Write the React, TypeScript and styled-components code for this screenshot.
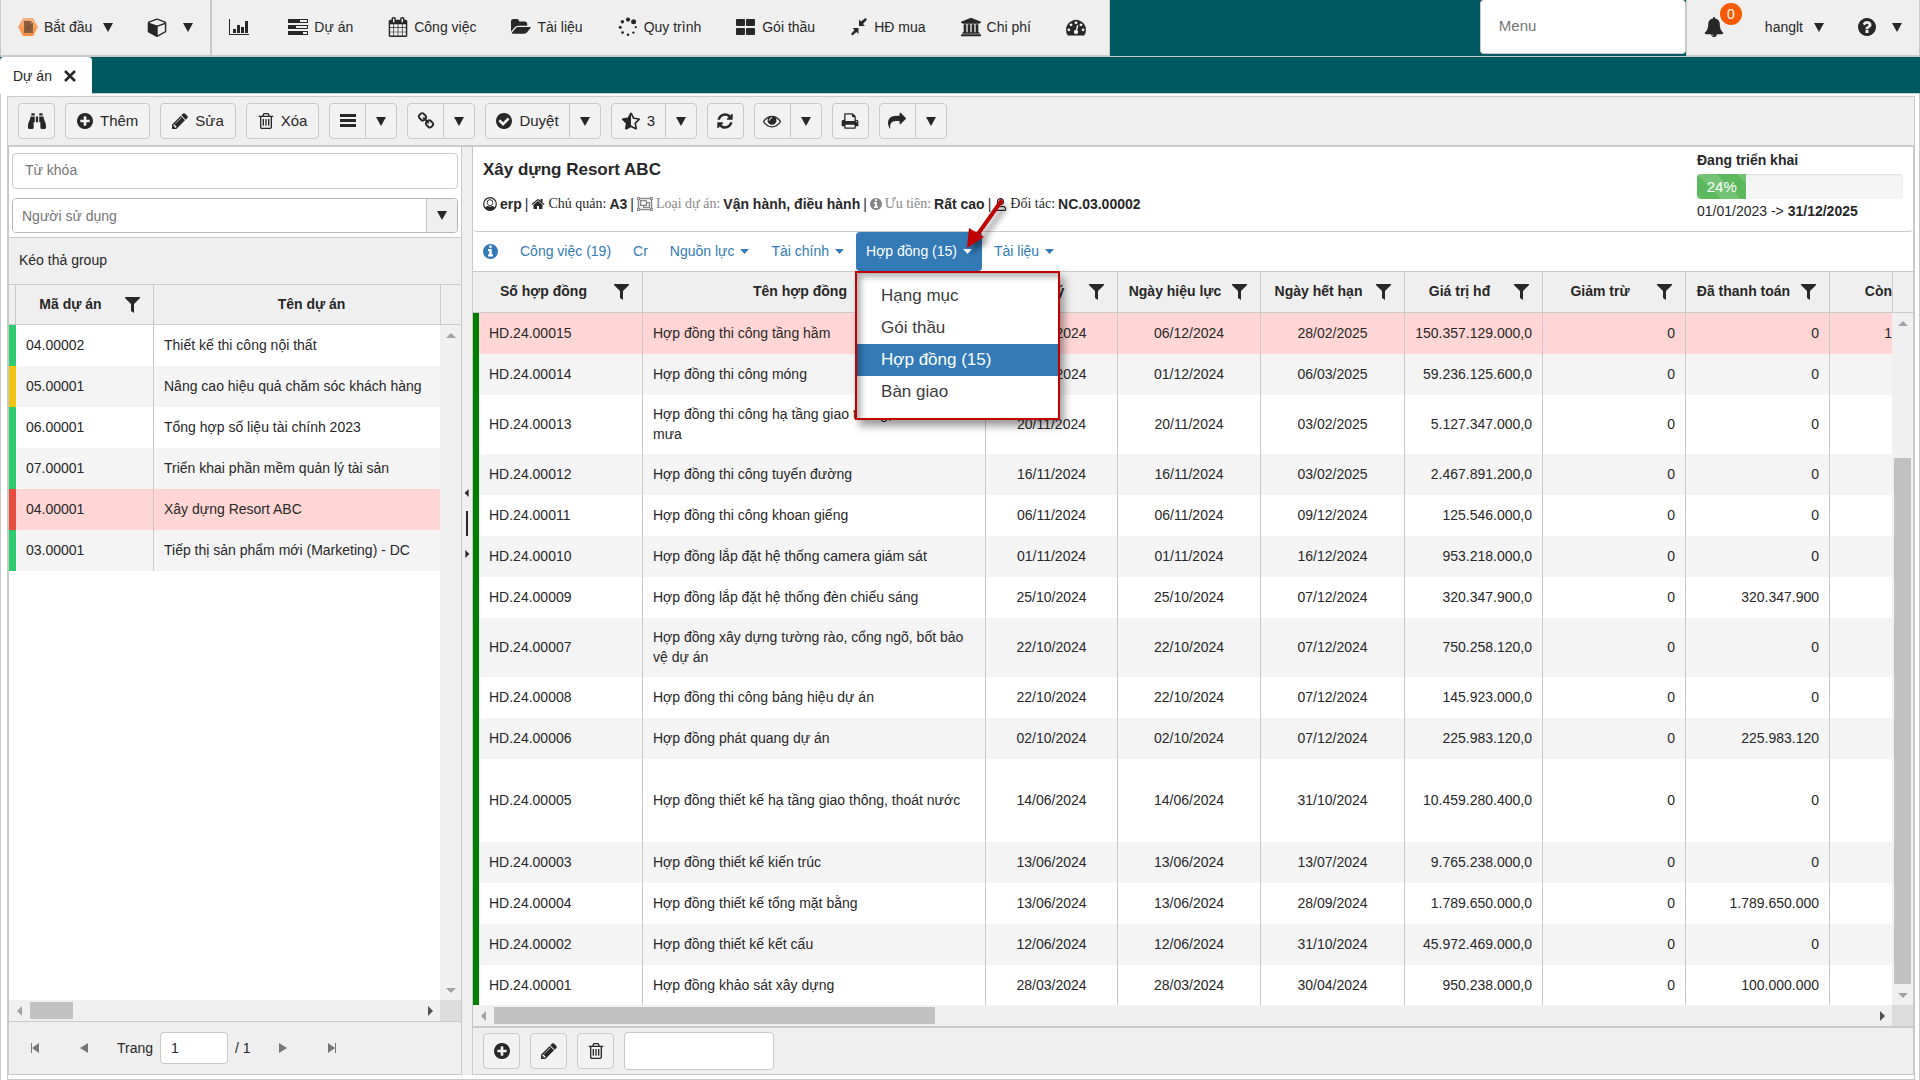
import React from 'react';
import styled, { createGlobalStyle, css } from 'styled-components';
import { FaBinoculars, FaStarHalfAlt, FaRegUser, FaRegObjectGroup } from 'react-icons/fa';

const line = '#c9c9c9';
const panel = '#efefef';
const ink = '#272727';
const teal = '#005961';
const blue = '#337ab7';

const GlobalStyle = createGlobalStyle`
  *, *::before, *::after { box-sizing: border-box; }
  html, body { margin: 0; padding: 0; }
  body {
    font: 14px/20px "Liberation Sans", Arial, sans-serif;
    color: ${ink};
    background: #fff;
  }
  button, input, select { font: inherit; color: inherit; margin: 0; }
  button { cursor: pointer; }
  a { text-decoration: none; color: inherit; }
  svg { display: block; flex: none; }
`;

/* ---------- icons ---------- */

const DISC =
  'M1664 896q0 209-103 385.5t-279.5 279.5-385.5 103-385.5-103-279.5-279.5-103-385.5 103-385.5 279.5-279.5 385.5-103 385.5 103 279.5 279.5 103 385.5z';

const PATHS: Record<string, string> = {
  plus:
    'M1344 960v-128q0-26-19-45t-45-19h-256v-256q0-26-19-45t-45-19h-128q-26 0-45 19t-19 45v256h-256q-26 0-45 19t-19 45v128q0 26 19 45t45 19h256v256q0 26 19 45t45 19h128q26 0 45-19t19-45v-256h256q26 0 45-19t19-45z' + DISC,
  check:
    'M1412 734q0-28-18-46l-91-90q-19-19-45-19t-45 19l-408 407-226-226q-19-19-45-19t-45 19l-91 90q-18 18-18 46 0 27 18 45l362 362q19 19 45 19 27 0 46-19l543-543q18-18 18-45z' + DISC,
  question:
    'M1024 1376v-192q0-14-9-23t-23-9h-192q-14 0-23 9t-9 23v192q0 14 9 23t23 9h192q14 0 23-9t9-23zm256-672q0-88-55.5-163t-138.5-116-170-41q-243 0-371 213-15 24 8 42l132 100q7 6 19 6 16 0 25-12 53-68 86-92 34-24 86-24 48 0 85.5 26t37.5 59q0 38-20 61t-68 45q-63 28-115.5 86.5t-52.5 125.5v36q0 14 9 23t23 9h192q14 0 23-9t9-23q0-19 21.5-49.5t54.5-49.5q32-18 49-28.5t46-35 44.5-48 28-60.5 12.5-81z' + DISC,
  info:
    'M1152 1376v-160q0-14-9-23t-23-9h-96v-512q0-14-9-23t-23-9h-320q-14 0-23 9t-9 23v160q0 14 9 23t23 9h96v320h-96q-14 0-23 9t-9 23v160q0 14 9 23t23 9h448q14 0 23-9t9-23zm-128-896v-160q0-14-9-23t-23-9h-192q-14 0-23 9t-9 23v160q0 14 9 23t23 9h192q14 0 23-9t9-23z' + DISC,
  pencil:
    'M491 1536l91-91-235-235-91 91v107h128v128h107zm523-928q0-22-22-22-10 0-17 7l-542 542q-7 7-7 17 0 22 22 22 10 0 17-7l542-542q7-7 7-17zm-54-192l416 416-832 832h-416v-416zm683 96q0 53-37 90l-166 166-416-416 166-165q36-38 90-38 53 0 91 38l235 234q37 39 37 91z',
  trash:
    'M704 736v576q0 14-9 23t-23 9h-64q-14 0-23-9t-9-23v-576q0-14 9-23t23-9h64q14 0 23 9t9 23zm256 0v576q0 14-9 23t-23 9h-64q-14 0-23-9t-9-23v-576q0-14 9-23t23-9h64q14 0 23 9t9 23zm256 0v576q0 14-9 23t-23 9h-64q-14 0-23-9t-9-23v-576q0-14 9-23t23-9h64q14 0 23 9t9 23zm128 724v-948h-896v948q0 22 7 40.5t14.5 27 10.5 8.5h832q3 0 10.5-8.5t14.5-27 7-40.5zm-672-1076h448l-48-117q-7-9-17-11h-317q-10 2-17 11zm928 32v64q0 14-9 23t-23 9h-96v948q0 83-47 143.5t-113 60.5h-832q-66 0-113-58.5t-47-141.5v-952h-96q-14 0-23-9t-9-23v-64q0-14 9-23t23-9h309l70-167q15-37 54-63t79-26h320q40 0 79 26t54 63l70 167h309q14 0 23 9t9 23z',
  refresh:
    'M1639 1056q0 5-1 7-64 268-268 434.5t-478 166.5q-146 0-282.5-55t-243.5-157l-129 129q-19 19-45 19t-45-19-19-45v-448q0-26 19-45t45-19h448q26 0 45 19t19 45-19 45l-137 137q71 66 161 102t187 36q134 0 250-65t186-179q11-17 53-117 8-23 30-23h192q13 0 22.5 9.5t9.5 22.5zm25-800v448q0 26-19 45t-45 19h-448q-26 0-45-19t-19-45 19-45l138-138q-148-137-349-137-134 0-250 65t-186 179q-11 17-53 117-8 23-30 23h-199q-13 0-22.5-9.5t-9.5-22.5v-7q65-268 270-434.5t480-166.5q146 0 284 55.5t245 156.5l130-129q19-19 45-19t45 19 19 45z',
  print:
    'M448 1536h896v-256h-896v256zm0-640h896v-384h-160q-40 0-68-28t-28-68v-160h-640v640zm1152 64q0-26-19-45t-45-19-45 19-19 45 19 45 45 19 45-19 19-45zm128 0v416q0 13-9.5 22.5t-22.5 9.5h-224v160q0 40-28 68t-68 28h-960q-40 0-68-28t-28-68v-160h-224q-13 0-22.5-9.5t-9.5-22.5v-416q0-79 56.5-135.5t135.5-56.5h64v-544q0-40 28-68t68-28h672q40 0 88 20t76 48l152 152q28 28 48 76t20 88v256h64q79 0 135.5 56.5t56.5 135.5z',
  share:
    'M1792 640q0 26-19 45l-512 512q-19 19-45 19t-45-19-19-45v-256h-224q-98 0-175.5 6t-154 21.5-133 42.5-105.5 69.5-80 101-48.5 138.5-17.5 181q0 55 5 123 0 6 2.5 23.5t2.5 26.5q0 15-8.5 25t-23.5 10q-16 0-28-17-7-9-13-22t-13.5-30-10.5-24q-127-285-127-451 0-199 53-333 162-403 875-403h224v-256q0-26 19-45t45-19 45 19l512 512q19 19 19 45z',
  bell:
    'M912 1696q0-16-16-16-59 0-101.5-42.5t-42.5-101.5q0-16-16-16t-16 16q0 73 51.5 124.5t124.5 51.5q16 0 16-16zm816-288q0 52-38 90t-90 38h-448q0 106-75 181t-181 75-181-75-75-181h-448q-52 0-90-38t-38-90q50-42 91-88t85-119.5 74.5-158.5 50-206 19.5-260q0-152 117-282.5t307-158.5q-8-19-8-39 0-40 28-68t68-28 68 28 28 68q0 20-8 39 190 28 307 158.5t117 282.5q0 139 19.5 260t50 206 74.5 158.5 85 119.5 91 88z',
  home:
    'M1472 992v480q0 26-19 45t-45 19h-384v-384h-256v384h-384q-26 0-45-19t-19-45v-480q0-1 .5-3t.5-3l575-474 575 474q1 2 1 6zm223-69l-62 74q-8 9-21 11h-3q-13 0-21-7l-692-577-692 577q-12 8-24 7-13-2-21-11l-62-74q-8-10-7-23.5t11-21.5l719-599q32-26 76-26t76 26l244 204v-195q0-14 9-23t23-9h192q14 0 23 9t9 23v408l219 182q10 8 11 21.5t-7 23.5z',
  eye:
    'M1664 960q-152-236-381-353 61 104 61 225 0 185-131.5 316.5t-316.5 131.5-316.5-131.5-131.5-316.5q0-121 61-225-229 117-381 353 133 205 333.5 326.5t434.5 121.5 434.5-121.5 333.5-326.5zm-720-384q0-20-14-34t-34-14q-125 0-214.5 89.5t-89.5 214.5q0 20 14 34t34 14 34-14 14-34q0-86 61-147t147-61q20 0 34-14t14-34zm848 384q0 34-20 69-140 230-376.5 368.5t-499.5 138.5-499.5-139-376.5-368q-20-35-20-69t20-69q140-229 376.5-368t499.5-139 499.5 139 376.5 368q20 35 20 69z',
  gauge:
    'M384 1152q0-53-37.5-90.5t-90.5-37.5-90.5 37.5-37.5 90.5 37.5 90.5 90.5 37.5 90.5-37.5 37.5-90.5zm192-448q0-53-37.5-90.5t-90.5-37.5-90.5 37.5-37.5 90.5 37.5 90.5 90.5 37.5 90.5-37.5 37.5-90.5zm428 481l101-382q6-26-7.5-48.5t-38.5-29.5-48 6.5-30 39.5l-101 382q-60 5-107 43.5t-63 98.5q-20 77 20 146t117 89 146-20 89-117q16-60-6-117t-72-91zm660-33q0-53-37.5-90.5t-90.5-37.5-90.5 37.5-37.5 90.5 37.5 90.5 90.5 37.5 90.5-37.5 37.5-90.5zm-640-640q0-53-37.5-90.5t-90.5-37.5-90.5 37.5-37.5 90.5 37.5 90.5 90.5 37.5 90.5-37.5 37.5-90.5zm448 192q0-53-37.5-90.5t-90.5-37.5-90.5 37.5-37.5 90.5 37.5 90.5 90.5 37.5 90.5-37.5 37.5-90.5zm320 448q0 261-141 483-19 29-54 29h-1402q-35 0-54-29-141-221-141-483 0-182 71-348t191-286 286-191 348-71 348 71 286 191 191 286 71 348z',
  bank:
    'M832 0l960 384v128h-128q0 26-20.5 45t-48.5 19h-1526q-28 0-48.5-19t-20.5-45h-128v-128zm-704 640h256v768h128v-768h256v768h128v-768h256v768h128v-768h256v768h59q28 0 48.5 19t20.5 45v64h-1664v-64q0-26 20.5-45t48.5-19h59v-768zm1595 960q28 0 48.5 19t20.5 45v128h-1920v-128q0-26 20.5-45t48.5-19h1782z',
  calendar:
    'M192 1664h288v-288h-288v288zm352 0h320v-288h-320v288zm-352-352h288v-320h-288v320zm352 0h320v-320h-320v320zm-352-384h288v-288h-288v288zm736 736h320v-288h-320v288zm-384-736h320v-288h-320v288zm768 736h288v-288h-288v288zm-384-352h320v-320h-320v320zm-352-864v-288q0-13-9.5-22.5t-22.5-9.5h-64q-13 0-22.5 9.5t-9.5 22.5v288q0 13 9.5 22.5t22.5 9.5h64q13 0 22.5-9.5t9.5-22.5zm736 864h288v-320h-288v320zm-384-384h320v-288h-320v288zm384 0h288v-288h-288v288zm32-480v-288q0-13-9.5-22.5t-22.5-9.5h-64q-13 0-22.5 9.5t-9.5 22.5v288q0 13 9.5 22.5t22.5 9.5h64q13 0 22.5-9.5t9.5-22.5zm384-64v1280q0 52-38 90t-90 38h-1408q-52 0-90-38t-38-90v-1280q0-52 38-90t90-38h128v-96q0-66 47-113t113-47h64q66 0 113 47t47 113v96h384v-96q0-66 47-113t113-47h64q66 0 113 47t47 113v96h128q52 0 90 38t38 90z',
  cube:
    'M896 1629l640-349v-636l-640 233v752zm-64-865l698-254-698-254-698 254zm832-252v768q0 35-18 65t-49 47l-704 384q-28 16-61 16t-61-16l-704-384q-31-17-49-47t-18-65v-768q0-40 23-73t61-47l704-256q22-8 44-8t44 8l704 256q38 14 61 47t23 73z',
  folder:
    'M1879 952q0 31-31 66l-336 396q-43 51-120.5 86.5t-143.5 35.5h-1088q-34 0-60.5-13t-26.5-43q0-31 31-66l336-396q43-51 120.5-86.5t143.5-35.5h1088q34 0 60.5 13t26.5 43zm-343-344v160h-832q-94 0-197 47.5t-164 119.5l-337 396-5 6q0-4-.5-12.5t-.5-12.5v-960q0-92 66-158t158-66h320q92 0 158 66t66 158v32h544q92 0 158 66t66 158z',
  link:
    'M1520 1216q0-40-28-68l-208-208q-28-28-68-28-42 0-72 32 3 3 19 18.5t21.5 21.5 15 19 13 25.5 3.5 27.5q0 40-28 68t-68 28q-15 0-27.5-3.5t-25.5-13-19-15-21.5-21.5-18.5-19q-33 31-33 73 0 40 28 68l206 207q27 27 68 27 40 0 68-26l147-146q28-28 28-67zm-703-705q0-40-28-68l-206-207q-28-28-68-28-39 0-68 27l-147 146q-28 28-28 67 0 40 28 68l208 208q27 27 68 27 42 0 72-31-3-3-19-18.5t-21.5-21.5-15-19-13-25.5-3.5-27.5q0-40 28-68t68-28q15 0 27.5 3.5t25.5 13 19 15 21.5 21.5 18.5 19q33-31 33-73zm895 705q0 120-85 203l-147 146q-83 83-203 83-121 0-204-85l-206-207q-83-83-83-203 0-123 88-209l-88-88q-86 88-208 88-120 0-204-84l-208-208q-84-84-84-204t85-203l147-146q83-83 203-83 121 0 204 85l206 207q83 83 83 203 0 123-88 209l88 88q86-88 208-88 120 0 204 84l208 208q84 84 84 204z',
};

const TIGHT = '128 128 1536 1536';
const BOXES: Record<string, string> = {
  plus: TIGHT,
  check: TIGHT,
  question: TIGHT,
  info: TIGHT,
  pencil: TIGHT,
  trash: TIGHT,
  bank: '-128 0 1920 1792',
  cube: '-64 0 1792 1792',
  folder: '0 64 1900 1664',
  calendar: '64 0 1664 1792',
};

function Icon({ name, size = 18 }: { name: string; size?: number }) {
  return (
    <svg width={size} height={size} viewBox={BOXES[name] ?? '0 0 1792 1792'} fill="currentColor" fillRule="evenodd" aria-hidden>
      <path d={PATHS[name]} />
    </svg>
  );
}

const ChartIcon = () => (
  <svg width="24" height="18" viewBox="0 0 24 18" fill="currentColor" aria-hidden>
    <path d="M0 1h1v15h19v1H0zM4 11h3v4H4zM8 7h3v8H8zM12 9h3v6h-3zM16 3h3v12h-3z" />
  </svg>
);
const TasksIcon = () => (
  <svg width="20" height="16" viewBox="0 0 20 16" fill="currentColor" fillRule="evenodd" aria-hidden>
    <path d="M0 0h20v4H0zM12 1h7v2h-7zM0 6h20v4H0zM8 7h11v2H8zM0 12h20v4H0zM15 13h4v2h-4z" />
  </svg>
);
const SpinnerIcon = () => (
  <svg width="20" height="20" viewBox="0 0 20 20" fill="currentColor" aria-hidden>
    <circle cx="10" cy="2.6" r="2.1" /><circle cx="15.6" cy="4.800" r="2.500" /><circle cx="17.800" cy="10.2" r="1.1" />
    <circle cx="15.4" cy="15.6" r="1.2" /><circle cx="10" cy="17.800" r="1.3" /><circle cx="4.600" cy="15.600" r="1.4" />
    <circle cx="2.200" cy="10.200" r="1.500" /><circle cx="4.400" cy="4.800" r="1.700" />
  </svg>
);
const TilesIcon = () => (
  <svg width="20" height="16" viewBox="0 0 20 16" fill="currentColor" aria-hidden>
    <rect width="9" height="7" rx="1" /><rect x="10" width="9" height="7" rx="1" />
    <rect y="9" width="9" height="7" rx="1" /><rect x="10" y="9" width="9" height="7" rx="1" />
  </svg>
);
const ShrinkIcon = () => (
  <svg width="18" height="18" viewBox="0 0 18 18" fill="currentColor" aria-hidden>
    <path d="M9 1.5l2 2L15.500 0l1.500 1.500L13 6l2 2H9zM8.500 10v6l-2-2L2.500 17.500 1 16l3.500-4-2-2z" />
  </svg>
);
const LinesIcon = () => (
  <svg width="16" height="14" viewBox="0 0 16 14" fill="currentColor" aria-hidden>
    <path d="M0 0h16v3H0zM0 5h16v3H0zM0 10h16v3H0z" />
  </svg>
);
const CloseIcon = () => (
  <svg width="12" height="12" viewBox="0 0 12 12" stroke="currentColor" strokeWidth="2.600" aria-hidden>
    <path d="M1 1l10 10M11 1L1 11" />
  </svg>
);
const FunnelIcon = () => (
  <svg width="15" height="16" viewBox="0 0 15 16" fill="currentColor" aria-hidden>
    <path d="M0 0h15v1L9 7v9l-3-2V7L0 1z" />
  </svg>
);
const DocumentHexIcon = () => (
  <svg width="20" height="20" viewBox="0 0 20 20" aria-hidden>
    <defs>
      <linearGradient id="hex" x1="0" y1="0" x2="0" y2="1">
        <stop offset="0" stopColor="#f3b184" /><stop offset="1" stopColor="#ff8a3c" />
      </linearGradient>
    </defs>
    <path d="M5 1h10l5 9-5 9H5L0 10z" fill="url(#hex)" />
    <path d="M6 4h6l3 3v9H6z" fill="#8d5d3f" />
    <path d="M12 4v3h3zM8 9h5M8 11h5M8 13h5" fill="#d89a70" stroke="#6e4830" strokeWidth=".6" />
  </svg>
);
const PersonRingIcon = () => (
  <svg width="14" height="14" viewBox="0 0 14 14" fill="none" stroke="currentColor" aria-hidden>
    <circle cx="7" cy="7" r="6.300" strokeWidth="1.200" />
    <path d="M4.200 5.500a2.800 2.800 0 0 1 5.600 0c0 1.700-1.100 3.300-2.800 3.300S4.200 7.200 4.200 5.500z" strokeWidth="1" />
    <path d="M2 11c1-1.700 2.200-2 3.200-2L7 10l1.800-1c1 0 2.200.3 3.200 2-1.200 1.600-3 2.400-5 2.400S3.200 12.600 2 11z" fill="currentColor" stroke="none" />
  </svg>
);

type Dir = 'up' | 'down' | 'left' | 'right';
const TRI: Record<Dir, string> = {
  up: 'M5 2l5 5H0z',
  down: 'M0 3h10L5 8z',
  left: 'M7 0v10L2 5z',
  right: 'M3 0l5 5-5 5z',
};
const Tri = ({ dir, color = ink, size = 10 }: { dir: Dir; color?: string; size?: number }) => (
  <svg width={size} height={size} viewBox="0 0 10 10" fill={color} aria-hidden><path d={TRI[dir]} /></svg>
);
const PagerTri = ({ dir }: { dir: 'left' | 'right' }) => (
  <svg width="10" height="10" viewBox="0 0 10 10" fill="#777" aria-hidden>
    <path d={dir === 'left' ? 'M9 0v10L1 5z' : 'M1 0l8 5-8 5z'} />
  </svg>
);
const Caret = () => (
  <svg width="10" height="9" viewBox="0 0 10 9" fill="currentColor" aria-hidden><path d="M0 0h10L5 9z" /></svg>
);
const SmallCaret = () => (
  <svg width="9" height="5" viewBox="0 0 9 5" fill="currentColor" aria-hidden><path d="M0 0h9L4.500 5z" /></svg>
);
const Edge = ({ flip }: { flip?: boolean }) => (
  <svg width="10" height="10" viewBox="0 0 10 10" fill="#777" aria-hidden>
    <path d={flip ? 'M1 0l7 5-7 5zM8 0h1v10H8z' : 'M9 0v10L2 5zM1 0h1v10H1z'} />
  </svg>
);

/* ---------- shell ---------- */

const Page = styled.div`
  height: 100vh;
  min-height: 600px;
  display: flex;
  flex-direction: column;
`;
const TopBar = styled.header`
  display: flex;
  height: 57px;
  background: ${teal};
  border-bottom: 1px solid ${line};
`;
const TopGroup = styled.nav<{ $main?: boolean }>`
  display: flex;
  align-items: stretch;
  gap: ${p => (p.$main ? 1 : 0)}px;
  padding-right: ${p => (p.$main ? 6 : 0)}px;
  background: ${panel};
  border: 1px solid ${line};
  border-width: 0 1px 1px;
`;
const TopItem = styled.button`
  display: flex;
  align-items: center;
  gap: 6px;
  padding: 10px 17px 11px;
  border: 0;
  background: none;
  white-space: nowrap;
`;
const CaretGap = styled.span<{ $wide?: boolean }>`
  padding-left: ${p => (p.$wide ? 10 : 5)}px;
  display: flex;
`;
const MenuSearch = styled.input`
  width: 206px;
  height: 54px;
  margin-left: auto;
  padding: 0 18px 3px;
  border: 1px solid ${line};
  border-top: 0;
  border-radius: 4px;
  background: #fff;
  font-size: 15px;
  &::placeholder { color: #757575; }
`;
const BellBox = styled.span`
  position: relative;
  display: flex;
  padding-right: 7px;
`;
const Badge = styled.span`
  position: absolute;
  left: 16px;
  top: -14px;
  width: 22px;
  height: 22px;
  border-radius: 50%;
  background: #f55a00;
  color: #fff;
  line-height: 22px;
  text-align: center;
`;
const TabStrip = styled.div`
  display: flex;
  height: 37px;
  background: ${teal};
  border-bottom: 1px solid ${line};
`;
const DocTab = styled.div`
  display: flex;
  align-items: center;
  gap: 12px;
  height: 37px;
  padding: 0 16px 0 13px;
  border-radius: 4px 4px 0 0;
  background: #fff;
`;
const CloseButton = styled.button`
  display: flex;
  border: 0;
  padding: 0;
  background: none;
`;
const Frame = styled.main`
  flex: 1;
  min-height: 0;
  display: flex;
  flex-direction: column;
  border: 1px solid ${line};
  border-width: 0 1px;
  padding: 2px 4px 0 6px;
`;
const Workspace = styled.div`
  flex: 1;
  min-height: 0;
  display: flex;
  flex-direction: column;
  border: 1px solid ${line};
`;
const Toolbar = styled.div`
  display: flex;
  gap: 10px;
  padding: 6px 10px;
  background: ${panel};
  border-bottom: 2px solid ${line};
`;
const shell = css`
  border: 1px solid ${line};
  border-radius: 4px;
  background: #f2f2f2;
`;
const ToolButton = styled.button<{ $square?: boolean }>`
  ${shell}
  display: flex;
  align-items: center;
  justify-content: center;
  gap: 7px;
  height: 36px;
  padding: 0 ${p => (p.$square ? 0 : 11)}px;
  min-width: 37px;
  font-size: 15px;
`;
const Split = styled.div`
  ${shell}
  display: flex;
  height: 36px;
  font-size: 15px;
`;
const SplitMain = styled.button<{ $text?: boolean }>`
  display: flex;
  align-items: center;
  justify-content: center;
  gap: 7px;
  min-width: 35px;
  padding: 0 ${p => (p.$text ? 10 : 8)}px;
  border: 0;
  background: none;
`;
const SplitArrow = styled.button`
  display: flex;
  align-items: center;
  justify-content: center;
  width: 31px;
  padding: 0;
  border: 0;
  border-left: 1px solid ${line};
  background: none;
`;
const Panes = styled.div`
  flex: 1;
  min-height: 0;
  display: flex;
  padding-bottom: 4px;
`;

/* ---------- left pane ---------- */

const LeftPane = styled.section`
  width: 454px;
  flex: none;
  display: flex;
  flex-direction: column;
  border: 1px solid ${line};
  border-top: 0;
`;
const Filters = styled.div`
  display: flex;
  flex-direction: column;
  gap: 9px;
  padding: 6px 3px 4px;
  border-bottom: 1px solid ${line};
`;
const Keyword = styled.input`
  height: 36px;
  padding: 0 12px 2px;
  border: 1px solid ${line};
  border-radius: 4px;
  outline: 0;
  &::placeholder { color: #757575; }
`;
const Combo = styled.div`
  display: flex;
  height: 35px;
  border: 1px solid #b5b5b5;
  border-radius: 4px;
  overflow: hidden;
`;
const ComboSelect = styled.select`
  flex: 1;
  appearance: none;
  padding: 0 9px;
  border: 0;
  background: #fff;
  color: #757575;
`;
const ComboArrow = styled.span`
  display: flex;
  align-items: center;
  justify-content: center;
  width: 31px;
  border-left: 1px solid ${line};
  background: ${panel};
`;
const GroupHint = styled.div`
  padding: 12px 10px 14px;
  background: ${panel};
  border-bottom: 1px solid ${line};
`;
const GridBody = styled.div`
  flex: 1;
  min-height: 0;
  display: grid;
  grid-template-columns: minmax(0, 1fr) 21px;
  grid-template-rows: minmax(0, 1fr) 21px;
`;
const Clip = styled.div`
  overflow: hidden;
  background: #fff;
`;
const Table = styled.table<{ $extra?: number }>`
  width: calc(100% + ${p => p.$extra ?? 0}px);
  table-layout: fixed;
  border-collapse: separate;
  border-spacing: 0;
`;
const Th = styled.th<{ $h: number; $bare?: boolean }>`
  height: ${p => p.$h}px;
  padding: 0;
  background: ${panel};
  border-bottom: 1px solid ${line};
  border-right: ${p => (p.$bare ? 0 : 1)}px solid ${line};
  white-space: nowrap;
`;
const HeadCell = styled.span<{ $filter?: boolean }>`
  display: flex;
  align-items: center;
  padding-right: ${p => (p.$filter ? 13 : 0)}px;
`;
const HeadText = styled.span<{ $end?: boolean }>`
  flex: 1;
  padding-bottom: 2px;
  text-align: ${p => (p.$end ? 'right' : 'center')};
`;
const Row = styled.tr<{ $h: number; $selected?: boolean }>`
  height: ${p => p.$h}px;
  background: ${p => (p.$selected ? '#ffd6d5' : '#fff')};
  &:nth-child(even) { background: ${p => (p.$selected ? '#ffd6d5' : '#f4f4f4')}; }
`;
const Td = styled.td<{ $align?: string; $bare?: boolean }>`
  padding: 0 10px 2px;
  border-right: ${p => (p.$bare ? 0 : 1)}px solid ${line};
  text-align: ${p => p.$align ?? 'left'};
  overflow: hidden;
`;
const LastCell = styled(Td)`
  padding: 0 0 2px;
`;
const Mark = styled.td<{ $color: string }>`
  padding: 0;
  background: ${p => p.$color};
`;
const VTrack = styled.div<{ $head: number }>`
  display: flex;
  flex-direction: column;
  align-items: center;
  background: #f0f0f0;
  &::before {
    content: "";
    flex: none;
    align-self: stretch;
    height: ${p => p.$head}px;
    background: ${panel};
    border-left: 1px solid ${line};
    border-bottom: 1px solid ${line};
  }
`;
const ArrowCell = styled.span`
  flex: none;
  display: flex;
  align-items: center;
  justify-content: center;
  width: 21px;
  height: 21px;
`;
const VSpace = styled.div`
  flex: 1;
  align-self: stretch;
  display: flex;
  flex-direction: column;
  justify-content: flex-end;
  padding: 0 2px;
`;
const VThumb = styled.div`
  height: 81%;
  background: #c1c1c1;
`;
const HTrack = styled.div`
  display: flex;
  align-items: center;
  background: #f0f0f0;
`;
const HSpace = styled.div`
  flex: 1;
  height: 17px;
`;
const HThumb = styled.div<{ $w: string }>`
  width: ${p => p.$w};
  height: 100%;
  background: #c1c1c1;
`;
const Corner = styled.div`
  background: #dcdcdc;
`;
const Pager = styled.div`
  display: flex;
  align-items: center;
  height: 53px;
  padding-left: 4px;
  background: ${panel};
  border-top: 1px solid ${line};
`;
const PagerButton = styled.button`
  display: flex;
  align-items: center;
  justify-content: center;
  width: 44px;
  height: 36px;
  padding: 0;
  border: 0;
  background: none;
  margin-right: 5px;
`;
const PageLabel = styled.label`
  display: flex;
  align-items: center;
  gap: 7px;
  margin: 0 10px 0 6px;
`;
const PageBox = styled.input`
  width: 68px;
  height: 32px;
  padding: 0 10px;
  border: 1px solid ${line};
  border-radius: 4px;
  background: #fff;
`;

/* ---------- splitter ---------- */

const Splitter = styled.div`
  flex: none;
  width: 10px;
  display: flex;
  flex-direction: column;
  align-items: center;
  justify-content: center;
  gap: 14px;
  padding-bottom: 176px;
  background: ${panel};
`;
const Grip = styled.span`
  width: 2px;
  height: 25px;
  background: ${ink};
`;

/* ---------- right pane ---------- */

const RightPane = styled.section`
  flex: 1;
  min-width: 0;
  display: flex;
  flex-direction: column;
  border: 1px solid ${line};
  border-top: 0;
`;
const Summary = styled.div`
  display: flex;
  justify-content: space-between;
  height: 85px;
  padding: 0 10px;
  border-bottom: 1px solid ${line};
  border-radius: 4px;
`;
const Title = styled.h1`
  margin: 13px 0 14px;
  font-size: 17px;
  line-height: 20px;
`;
const Facts = styled.div`
  display: flex;
  align-items: center;
  gap: 3px;
  white-space: nowrap;
`;
const Fact = styled.span<{ $dim?: boolean }>`
  display: flex;
  align-items: center;
  gap: 3px;
  color: ${p => (p.$dim ? '#888' : ink)};
  font-family: "Liberation Serif", "Times New Roman", serif;
`;
const Status = styled.div`
  width: 206px;
  padding-top: 3px;
`;
const Progress = styled.div`
  height: 25px;
  margin: 4px 0 2px;
  border-radius: 4px;
  overflow: hidden;
  background: #f5f5f5;
  box-shadow: inset 0 1px 2px rgba(0, 0, 0, 0.1);
`;
const ProgressFill = styled.div`
  height: 100%;
  background: linear-gradient(45deg, rgba(255,255,255,.15) 25%, transparent 25%, transparent 50%, rgba(255,255,255,.15) 50%, rgba(255,255,255,.15) 75%, transparent 75%) 0 0 / 40px 40px #5cb85c;
  color: #fff;
  font-size: 15px;
  line-height: 25px;
  text-align: center;
`;
const Tabs = styled.nav`
  display: flex;
  gap: 2px;
  height: 39px;
`;
const TabSlot = styled.div`
  position: relative;
`;
const TabLink = styled.a<{ $active?: boolean }>`
  display: flex;
  align-items: center;
  gap: 6px;
  height: 39px;
  padding: 0 10px 1px;
  border-radius: 4px;
  color: ${p => (p.$active ? '#fff' : blue)};
  background: ${p => (p.$active ? blue : 'none')};
  white-space: nowrap;
`;
const Dropdown = styled.div`
  position: absolute;
  left: -1px;
  top: 39px;
  z-index: 2;
  width: 205px;
  padding: 7px 0 10px;
  border: 2px solid #c00000;
  background: #fff;
  box-shadow: 4px 6px 8px rgba(0, 0, 0, 0.4);
  &::after {
    content: "";
    position: absolute;
    inset: 0;
    box-shadow: inset 5px 5px 6px -1px rgba(0, 0, 0, 0.3);
    pointer-events: none;
  }
`;
const DropItem = styled.a<{ $active?: boolean }>`
  display: block;
  padding: 0 24px;
  font-size: 17px;
  line-height: 32px;
  color: ${p => (p.$active ? '#fff' : '#3c3c3c')};
  background: ${p => (p.$active ? blue : 'none')};
`;
const Pointer = styled.svg`
  position: absolute;
  left: 104px;
  top: -36px;
  z-index: 3;
  filter: drop-shadow(4px 5px 3px rgba(0, 0, 0, 0.45));
  pointer-events: none;
`;
const GridFrame = styled(GridBody)`
  border-top: 1px solid ${line};
`;
const Footer = styled.div`
  display: flex;
  align-items: center;
  gap: 10px;
  height: 48px;
  padding-left: 10px;
  background: ${panel};
  border-top: 2px solid ${line};
`;
const FooterInput = styled.input`
  width: 150px;
  height: 38px;
  padding: 0 10px;
  border: 1px solid ${line};
  border-radius: 4px;
  background: #fff;
`;

/* ---------- data ---------- */

const projects = [
  ['04.00002', 'Thiết kế thi công nội thất', '#2ecc71'],
  ['05.00001', 'Nâng cao hiệu quả chăm sóc khách hàng', '#f1c40f'],
  ['06.00001', 'Tổng hợp số liệu tài chính 2023', '#2ecc71'],
  ['07.00001', 'Triển khai phần mềm quản lý tài sản', '#2ecc71'],
  ['04.00001', 'Xây dựng Resort ABC', '#e74c3c'],
  ['03.00001', 'Tiếp thị sản phẩm mới (Marketing) - DC', '#2ecc71'],
];

type Contract = [string, string, string, string, string, string, string, number?];
const contracts: Contract[] = [
  ['HD.24.00015', 'Hợp đồng thi công tầng hầm', '06/12/2024', '06/12/2024', '28/02/2025', '150.357.129.000,0', '0'],
  ['HD.24.00014', 'Hợp đồng thi công móng', '01/12/2024', '01/12/2024', '06/03/2025', '59.236.125.600,0', '0'],
  ['HD.24.00013', 'Hợp đồng thi công hạ tầng giao thông, thoát nước mưa', '20/11/2024', '20/11/2024', '03/02/2025', '5.127.347.000,0', '0', 59],
  ['HD.24.00012', 'Hợp đồng thi công tuyến đường', '16/11/2024', '16/11/2024', '03/02/2025', '2.467.891.200,0', '0'],
  ['HD.24.00011', 'Hợp đồng thi công khoan giếng', '06/11/2024', '06/11/2024', '09/12/2024', '125.546.000,0', '0'],
  ['HD.24.00010', 'Hợp đồng lắp đặt hệ thống camera giám sát', '01/11/2024', '01/11/2024', '16/12/2024', '953.218.000,0', '0'],
  ['HD.24.00009', 'Hợp đồng lắp đặt hệ thống đèn chiếu sáng', '25/10/2024', '25/10/2024', '07/12/2024', '320.347.900,0', '320.347.900'],
  ['HD.24.00007', 'Hợp đồng xây dựng tường rào, cổng ngõ, bốt bảo vệ dự án', '22/10/2024', '22/10/2024', '07/12/2024', '750.258.120,0', '0', 59],
  ['HD.24.00008', 'Hợp đồng thi công bảng hiệu dự án', '22/10/2024', '22/10/2024', '07/12/2024', '145.923.000,0', '0'],
  ['HD.24.00006', 'Hợp đồng phát quang dự án', '02/10/2024', '02/10/2024', '07/12/2024', '225.983.120,0', '225.983.120'],
  ['HD.24.00005', 'Hợp đồng thiết kế hạ tầng giao thông, thoát nước', '14/06/2024', '14/06/2024', '31/10/2024', '10.459.280.400,0', '0', 83],
  ['HD.24.00003', 'Hợp đồng thiết kế kiến trúc', '13/06/2024', '13/06/2024', '13/07/2024', '9.765.238.000,0', '0'],
  ['HD.24.00004', 'Hợp đồng thiết kế tổng mặt bằng', '13/06/2024', '13/06/2024', '28/09/2024', '1.789.650.000,0', '1.789.650.000'],
  ['HD.24.00002', 'Hợp đồng thiết kế kết cấu', '12/06/2024', '12/06/2024', '31/10/2024', '45.972.469.000,0', '0'],
  ['HD.24.00001', 'Hợp đồng khảo sát xây dựng', '28/03/2024', '28/03/2024', '30/04/2024', '950.238.000,0', '100.000.000'],
];

/* ---------- parts ---------- */

function HeaderCell({ text, h, filter = true, span }: { text: string; h: number; filter?: boolean; span?: number }) {
  return (
    <Th $h={h} colSpan={span}>
      <HeadCell $filter={filter}>
        <HeadText>{text}</HeadText>
        {filter && <FunnelIcon />}
      </HeadCell>
    </Th>
  );
}

function SplitButton({ label, text, children }: { label: string; text?: boolean; children: React.ReactNode }) {
  return (
    <Split>
      <SplitMain $text={text} aria-label={label}>{children}</SplitMain>
      <SplitArrow aria-label={`${label}: mở rộng`}><Caret /></SplitArrow>
    </Split>
  );
}

function ProjectPane() {
  return (
    <LeftPane>
      <Filters>
        <Keyword aria-label="Từ khóa" placeholder="Từ khóa" />
        <Combo>
          <ComboSelect aria-label="Người sử dụng"><option>Người sử dụng</option></ComboSelect>
          <ComboArrow><Caret /></ComboArrow>
        </Combo>
      </Filters>
      <GroupHint>Kéo thả group</GroupHint>
      <GridBody>
        <Clip>
          <Table $extra={30}>
            <colgroup><col style={{ width: 7 }} /><col style={{ width: 138 }} /><col /></colgroup>
            <thead>
              <tr>
                <Th $h={40} />
                <HeaderCell h={40} text="Mã dự án" />
                <HeaderCell h={40} text="Tên dự án" filter={false} />
              </tr>
            </thead>
            <tbody>
              {projects.map(([code, name, color], i) => (
                <Row key={code} $h={41} $selected={i === 4}>
                  <Mark $color={color} />
                  <Td>{code}</Td>
                  <Td $bare>{name}</Td>
                </Row>
              ))}
            </tbody>
          </Table>
        </Clip>
        <VTrack $head={40}>
          <ArrowCell><Tri dir="up" color="#a3a3a3" /></ArrowCell>
          <VSpace />
          <ArrowCell><Tri dir="down" color="#a3a3a3" /></ArrowCell>
        </VTrack>
        <HTrack>
          <ArrowCell><Tri dir="left" color="#a3a3a3" /></ArrowCell>
          <HSpace><HThumb $w="43px" /></HSpace>
          <ArrowCell><Tri dir="right" color="#505050" /></ArrowCell>
        </HTrack>
        <Corner />
      </GridBody>
      <Pager>
        <PagerButton aria-label="Trang đầu"><Edge /></PagerButton>
        <PagerButton aria-label="Trang trước"><PagerTri dir="left" /></PagerButton>
        <PageLabel>Trang <PageBox defaultValue="1" /> / 1</PageLabel>
        <PagerButton aria-label="Trang sau"><PagerTri dir="right" /></PagerButton>
        <PagerButton aria-label="Trang cuối"><Edge flip /></PagerButton>
      </Pager>
    </LeftPane>
  );
}

function ContractGrid() {
  return (
    <GridFrame>
      <Clip>
        <Table>
          <colgroup>
            <col style={{ width: 6 }} /><col style={{ width: 164 }} /><col />
            <col style={{ width: 132 }} /><col style={{ width: 143 }} /><col style={{ width: 144 }} />
            <col style={{ width: 138 }} /><col style={{ width: 143 }} /><col style={{ width: 144 }} />
            <col style={{ width: 62 }} />
          </colgroup>
          <thead>
            <tr>
              <HeaderCell h={41} text="Số hợp đồng" span={2} />
              <HeaderCell h={41} text="Tên hợp đồng" />
              <HeaderCell h={41} text="Ngày ký" />
              <HeaderCell h={41} text="Ngày hiệu lực" />
              <HeaderCell h={41} text="Ngày hết hạn" />
              <HeaderCell h={41} text="Giá trị hđ" />
              <HeaderCell h={41} text="Giảm trừ" />
              <HeaderCell h={41} text="Đã thanh toán" />
              <Th $h={41} $bare><HeadCell><HeadText $end>Còn</HeadText></HeadCell></Th>
            </tr>
          </thead>
          <tbody>
            {contracts.map(([code, name, signed, start, end, value, paid, h], i) => (
              <Row key={code} $h={h ?? 41} $selected={i === 0}>
                <Mark $color="#008000" />
                <Td>{code}</Td>
                <Td>{name}</Td>
                <Td $align="center">{signed}</Td>
                <Td $align="center">{start}</Td>
                <Td $align="center">{end}</Td>
                <Td $align="right">{value}</Td>
                <Td $align="right">0</Td>
                <Td $align="right">{paid}</Td>
                <LastCell $bare $align="right">{i === 0 ? '1' : ''}</LastCell>
              </Row>
            ))}
          </tbody>
        </Table>
      </Clip>
      <VTrack $head={41}>
        <ArrowCell><Tri dir="up" color="#a3a3a3" /></ArrowCell>
        <VSpace><VThumb /></VSpace>
        <ArrowCell><Tri dir="down" color="#a3a3a3" /></ArrowCell>
      </VTrack>
      <HTrack>
        <ArrowCell><Tri dir="left" color="#a3a3a3" /></ArrowCell>
        <HSpace><HThumb $w="32%" /></HSpace>
        <ArrowCell><Tri dir="right" color="#505050" /></ArrowCell>
      </HTrack>
      <Corner />
    </GridFrame>
  );
}

function DetailPane() {
  return (
    <RightPane>
      <Summary>
        <div>
          <Title>Xây dựng Resort ABC</Title>
          <Facts>
            <PersonRingIcon /><b>erp</b>|
            <Fact><Icon name="home" size={14} />Chủ quản:</Fact><b>A3</b>|
            <Fact $dim><FaRegObjectGroup size={16} />Loại dự án:</Fact><b>Vận hành, điều hành</b>|
            <Fact $dim><Icon name="info" size={12} />Ưu tiên:</Fact><b>Rất cao</b>|
            <Fact><FaRegUser size={13} />Đối tác:</Fact><b>NC.03.00002</b>
          </Facts>
        </div>
        <Status>
          <b>Đang triển khai</b>
          <Progress><ProgressFill style={{ width: '24%' }}>24%</ProgressFill></Progress>
          01/01/2023 -&gt; <b>31/12/2025</b>
        </Status>
      </Summary>
      <Tabs>
        <TabLink href="#info" aria-label="Thông tin"><Icon name="info" size={15} /></TabLink>
        <TabLink href="#tasks">Công việc (19)</TabLink>
        <TabLink href="#cr">Cr</TabLink>
        <TabLink href="#resources">Nguồn lực <SmallCaret /></TabLink>
        <TabLink href="#finance">Tài chính <SmallCaret /></TabLink>
        <TabSlot>
          <TabLink href="#contracts" $active>Hợp đồng (15) <SmallCaret /></TabLink>
          <Dropdown>
            <DropItem href="#items">Hạng mục</DropItem>
            <DropItem href="#packages">Gói thầu</DropItem>
            <DropItem href="#contracts" $active>Hợp đồng (15)</DropItem>
            <DropItem href="#handover">Bàn giao</DropItem>
          </Dropdown>
          <Pointer width="50" height="56" viewBox="0 0 50 56" aria-hidden>
            <path d="M42 4L18 38" stroke="#c00000" strokeWidth="4" />
            <path d="M7 52l2-20 15 9z" fill="#c00000" />
          </Pointer>
        </TabSlot>
        <TabLink href="#documents">Tài liệu <SmallCaret /></TabLink>
      </Tabs>
      <ContractGrid />
      <Footer>
        <ToolButton $square aria-label="Thêm hợp đồng"><Icon name="plus" size={16} /></ToolButton>
        <ToolButton $square aria-label="Sửa hợp đồng"><Icon name="pencil" size={16} /></ToolButton>
        <ToolButton $square aria-label="Xóa hợp đồng"><Icon name="trash" size={16} /></ToolButton>
        <FooterInput aria-label="Tìm hợp đồng" />
      </Footer>
    </RightPane>
  );
}

export default function App() {
  return (
    <Page>
      <GlobalStyle />
      <TopBar>
        <TopGroup>
          <TopItem><DocumentHexIcon />Bắt đầu<CaretGap><Caret /></CaretGap></TopItem>
          <TopItem aria-label="Phân hệ"><Icon name="cube" size={20} /><CaretGap $wide><Caret /></CaretGap></TopItem>
        </TopGroup>
        <TopGroup $main>
          <TopItem aria-label="Báo cáo"><ChartIcon /></TopItem>
          <TopItem><TasksIcon />Dự án</TopItem>
          <TopItem><Icon name="calendar" size={20} />Công việc</TopItem>
          <TopItem><Icon name="folder" size={20} />Tài liệu</TopItem>
          <TopItem><SpinnerIcon />Quy trình</TopItem>
          <TopItem><TilesIcon />Gói thầu</TopItem>
          <TopItem><ShrinkIcon />HĐ mua</TopItem>
          <TopItem><Icon name="bank" size={20} />Chi phí</TopItem>
          <TopItem aria-label="Tổng quan"><Icon name="gauge" size={20} /></TopItem>
        </TopGroup>
        <MenuSearch aria-label="Menu" placeholder="Menu" />
        <TopGroup>
          <TopItem aria-label="Thông báo">
            <BellBox><Icon name="bell" size={20} /><Badge>0</Badge></BellBox>
          </TopItem>
          <TopItem>hanglt<CaretGap><Caret /></CaretGap></TopItem>
          <TopItem aria-label="Trợ giúp"><Icon name="question" size={18} /><CaretGap $wide><Caret /></CaretGap></TopItem>
        </TopGroup>
      </TopBar>
      <TabStrip>
        <DocTab>Dự án<CloseButton aria-label="Đóng"><CloseIcon /></CloseButton></DocTab>
      </TabStrip>
      <Frame>
        <Workspace>
          <Toolbar>
            <ToolButton $square aria-label="Tìm kiếm"><FaBinoculars size={18} /></ToolButton>
            <ToolButton><Icon name="plus" size={16} />Thêm</ToolButton>
            <ToolButton><Icon name="pencil" size={16} />Sửa</ToolButton>
            <ToolButton><Icon name="trash" size={16} />Xóa</ToolButton>
            <SplitButton label="Danh sách"><LinesIcon /></SplitButton>
            <SplitButton label="Liên kết"><Icon name="link" /></SplitButton>
            <SplitButton label="Duyệt" text><Icon name="check" size={16} />Duyệt</SplitButton>
            <SplitButton label="Đánh dấu" text><FaStarHalfAlt size={18} />3</SplitButton>
            <ToolButton $square aria-label="Làm mới"><Icon name="refresh" /></ToolButton>
            <SplitButton label="Xem"><Icon name="eye" /></SplitButton>
            <ToolButton $square aria-label="In"><Icon name="print" /></ToolButton>
            <SplitButton label="Chia sẻ"><Icon name="share" /></SplitButton>
          </Toolbar>
          <Panes>
            <ProjectPane />
            <Splitter>
              <Tri dir="left" size={8} />
              <Grip />
              <Tri dir="right" size={8} />
            </Splitter>
            <DetailPane />
          </Panes>
        </Workspace>
      </Frame>
    </Page>
  );
}
